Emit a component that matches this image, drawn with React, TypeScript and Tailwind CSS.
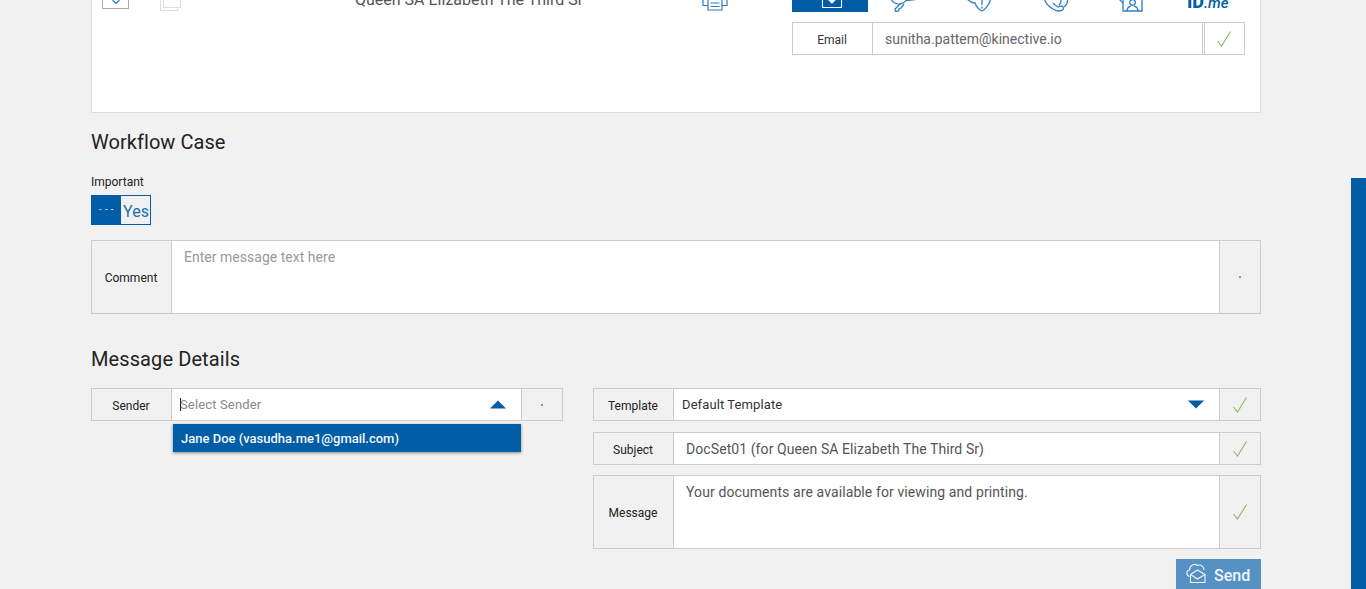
const font = "font-['Roboto',sans-serif]";

function Check() {
  return (
    <svg width="16" height="18" viewBox="0 0 16 18" fill="none">
      <path d="M1.5 11 L5.5 16 L14.5 1.5" stroke="#8ab861" strokeWidth="1.1" />
    </svg>
  );
}

function Arrow({ up }: { up?: boolean }) {
  return (
    <svg width="16" height="9" viewBox="0 0 16 9">
      <path d={up ? "M8 0.5 L16 8.5 L0 8.5 Z" : "M0 0.5 L16 0.5 L8 8.5 Z"} fill="#005da6" />
    </svg>
  );
}

function TopIcons() {
  const stroke = "#2f7fc0";
  return (
    <div className="flex h-[12px] items-end overflow-hidden">
      <div className="flex h-[12px] w-[76px] items-start justify-center bg-[#005da6] pl-[4px]">
        <svg width="22" height="9" viewBox="0 0 22 9" fill="none" stroke="#fff" strokeWidth="1.1">
          <path d="M1.5 0 V7.5 H20.5 V0" />
          <path d="M8 0 L11 3 L14 0 Z" fill="#fff" />
        </svg>
      </div>
      <svg className="ml-[22px]" width="26" height="12" viewBox="0 0 26 12" fill="none" stroke={stroke} strokeWidth="1.3">
        <path d="M0.5 -2 C2 2 6 4.5 10 4 C13 3.5 15 2 16 0.5 L25 -0.5" />
        <path d="M10 4 L5 9 L5.5 11.5 L8.5 11 L9 9 L11 8 L14 4" />
      </svg>
      <svg className="ml-[51px]" width="26" height="12" viewBox="0 0 26 12" fill="none" stroke={stroke} strokeWidth="1.3">
        <path d="M0 -1 C3 2 6 3 8 3 C9 6 11 9 15 11 C19 9 22 5 24 -2" />
        <path d="M15 -1 V5 M15 6.5 V8.5" />
      </svg>
      <svg className="ml-[50px]" width="26" height="12" viewBox="0 0 26 12" fill="none" stroke={stroke} strokeWidth="1.3">
        <path d="M1 -2 C2 2 6 7 11 9.5 C14 11.5 18 11.5 20 9.5 C21 8 20 6 18 6 L15 7 C13 6 11 5 10 3" />
        <path d="M17 -2 C19 1 18 3 16 5 M24 -2 C25 2 24 5 21 7" />
      </svg>
      <svg className="ml-[50px]" width="24" height="12" viewBox="0 0 24 12" fill="none" stroke={stroke} strokeWidth="1.3">
        <path d="M4 0 V11 H23 V0" />
        <circle cx="13.5" cy="2.5" r="2.8" />
        <path d="M8 11 C8 7 10 7 12 6 M19 11 C19 7 17 7 15 6" />
        <path d="M0 -1 L4 3" />
      </svg>
      <div className="relative ml-[44px] h-[12px] w-[42px] overflow-hidden">
        <span className="absolute top-[-9px] left-0 whitespace-nowrap text-[18px] leading-[21px] font-extrabold text-[#005da6]">
          ID<span className="text-[15px] font-medium italic">.me</span>
        </span>
      </div>
    </div>
  );
}

function Row({
  label,
  children,
  height,
  end,
}: {
  label: string;
  children: React.ReactNode;
  height: string;
  end: React.ReactNode;
}) {
  return (
    <div className={`flex ${height} border border-[#cccccc]`}>
      <div className="flex w-[80px] shrink-0 items-center justify-center border-r border-[#cccccc] bg-[#f1f1f1] pt-[2px] pr-[1px] text-[12px] text-[#222]">
        {label}
      </div>
      <div className="flex min-w-0 flex-1 bg-white">{children}</div>
      <div className="flex w-[41px] shrink-0 items-center justify-center border-l border-[#cccccc] bg-[#f1f1f1] pr-[1px]">{end}</div>
    </div>
  );
}

const Dot = () => <span className="block h-[2px] w-[2px] rounded-full bg-[#e0405f]" />;

export default function App() {
  return (
    <div className={`h-[589px] overflow-hidden bg-[#f1f1f1] ${font}`}>
      <div className="flex">
        <main className="ml-[91px] w-[1170px]">
          <section className="relative h-[113px] overflow-hidden border border-t-0 border-[#dddddd] bg-white">
            <div className="flex h-[12px] items-start">
              <div className="ml-[10px] flex h-[9px] w-[27px] items-start justify-center rounded-b-[1px] border border-t-0 border-[#aaaaaa]">
                <svg width="8" height="4" viewBox="0 0 8 4" fill="none"><path d="M0.5 0 L4 3.5 L7.5 0" stroke="#2f7fc0" strokeWidth="1.2" /></svg>
              </div>
              <div className="relative ml-[31px] h-[11px] w-[21px]">
                <div className="absolute top-0 left-0 h-[11px] w-[18px] border border-t-0 border-[#dddddd]" />
                <div className="absolute top-0 left-[3px] h-[8px] w-[18px] border border-t-0 border-[#dddddd] bg-white" />
              </div>
              <div className="relative ml-[174px] h-[12px] w-[340px] overflow-hidden">
                <span className="absolute -top-[10px] left-0 whitespace-nowrap text-[16px] leading-[20px] text-[#555]">
                  Queen SA Elizabeth The Third Sr
                </span>
              </div>
              <div className="ml-[8px] flex w-[24px] justify-center">
                <svg width="26" height="12" viewBox="0 0 26 12" fill="none" stroke="#2f7fc0" strokeWidth="1.2" className="shrink-0">
                  <path d="M1 -1 V5.5 H6 M20 5.5 H25 V-1" />
                  <path d="M6 -1 V10 H20 V-1" />
                  <path d="M8.5 3 H17.5 M8.5 6.5 H17.5" />
                </svg>
              </div>
              <div className="ml-[65px]">
                <TopIcons />
              </div>
            </div>
            <div className="ml-[700px] mt-[10px] w-[453px]">
              <div className="flex h-[33px] border border-[#cccccc] bg-white">
                <div className="flex w-[80px] shrink-0 items-center justify-center border-r border-[#cccccc] pt-[2px] pr-[1px] text-[12px] text-[#333]">
                  Email
                </div>
                <div className="flex flex-1 items-center border-r border-[#cccccc] pl-[12px] pt-[1px] text-[14px] text-[#666]">
                  sunitha.pattem@kinective.io
                </div>
                <div className="ml-px flex w-[40px] shrink-0 items-center justify-center border-l border-[#cccccc] pr-[1px]">
                  <Check />
                </div>
              </div>
            </div>
          </section>

          <h2 className="mt-[17px] text-[20px] leading-[24px] tracking-[0.05px] text-[#222]">Workflow Case</h2>
          <div className="mt-[21px] text-[12px] leading-[14px] text-[#222]">Important</div>
          <div className="mt-[6px] flex h-[30px] w-[60px] border border-[#005da6]">
            <div className="flex w-[29px] items-center justify-center bg-[#005da6] text-[9px] tracking-[0.6px] text-white">- - -</div>
            <div className="flex flex-1 items-center justify-center pt-[3px] pl-[1px] text-[16px] text-[#1a6fb3]">Yes</div>
          </div>

          <div className="mt-[15px]">
            <Row label="Comment" height="h-[74px]" end={<Dot />}>
              <div className="px-[12px] pt-[8px] text-[14px] leading-[17px] tracking-[0.02px] text-[#999]">Enter message text here</div>
            </Row>
          </div>

          <h2 className="mt-[33px] text-[20px] leading-[24px] tracking-[0.1px] text-[#222]">Message Details</h2>

          <div className="mt-[17px] flex gap-[30px]">
            <div className="relative w-[472px] shrink-0">
              <Row label="Sender" height="h-[33px]" end={<Dot />}>
                <div className="flex flex-1 items-center justify-between pl-[8px] pr-[15px]">
                  <div className="flex items-center text-[13px] tracking-[0.15px] text-[#888]">
                    <span className="mr-[-1px] block h-[13px] w-px bg-[#222]" />
                    Select Sender
                  </div>
                  <Arrow up />
                </div>
              </Row>
              <div className="absolute left-[82px] top-[36px] z-10 flex h-[28px] w-[348px] items-center bg-[#005da6] pl-[8px] pt-[1px] text-[13px] font-medium text-[#f2f6fa] shadow-[0_1px_3px_rgba(0,0,0,0.45)]">
                Jane Doe (vasudha.me1@gmail.com)
              </div>
            </div>

            <div className="flex min-w-0 flex-1 flex-col">
              <Row label="Template" height="h-[33px]" end={<Check />}>
                <div className="flex flex-1 items-center justify-between pl-[8px] pr-[15px] text-[13px] tracking-[0.1px] text-[#333]">
                  Default Template
                  <Arrow />
                </div>
              </Row>
              <div className="mt-[11px]">
                <Row label="Subject" height="h-[33px]" end={<Check />}>
                  <div className="flex flex-1 items-center pl-[12px] pt-[1px] text-[14px] tracking-[0.08px] text-[#555]">
                    DocSet01 (for Queen SA Elizabeth The Third Sr)
                  </div>
                </Row>
              </div>
              <div className="mt-[10px]">
                <Row label="Message" height="h-[74px]" end={<Check />}>
                  <div className="px-[12px] pt-[8px] text-[14px] leading-[17px] tracking-[0.1px] text-[#555]">
                    Your documents are available for viewing and printing.
                  </div>
                </Row>
              </div>
              <div className="mt-[10px] flex justify-end">
                <button className="flex h-[40px] w-[85px] items-start gap-[8px] bg-[#5591c3] pl-[10px] pt-[4px] text-[16px] font-medium text-[#f0f5fa]">
                  <svg width="20" height="20" viewBox="0 0 20 20" fill="none" stroke="#eef4f9" strokeWidth="1.1" className="shrink-0">
                    <path d="M3.5 13.5 C0 12.5 0 7.5 3.5 7 C3.5 2 9 0 11.5 2.5 C14 1 18 3 18 7" />
                    <path d="M4.5 11.5 L11.5 7 L19 11.5 V19.5 H4.5 Z" />
                    <path d="M4.5 11.5 L11.5 16 L19 11.5" />
                  </svg>
                  <span className="mt-[3px] leading-[20px]">Send</span>
                </button>
              </div>
            </div>
          </div>
        </main>
        <aside className="ml-[90px] mt-[178px] h-[411px] w-[15px] bg-[#005da6]" />
      </div>
    </div>
  );
}
